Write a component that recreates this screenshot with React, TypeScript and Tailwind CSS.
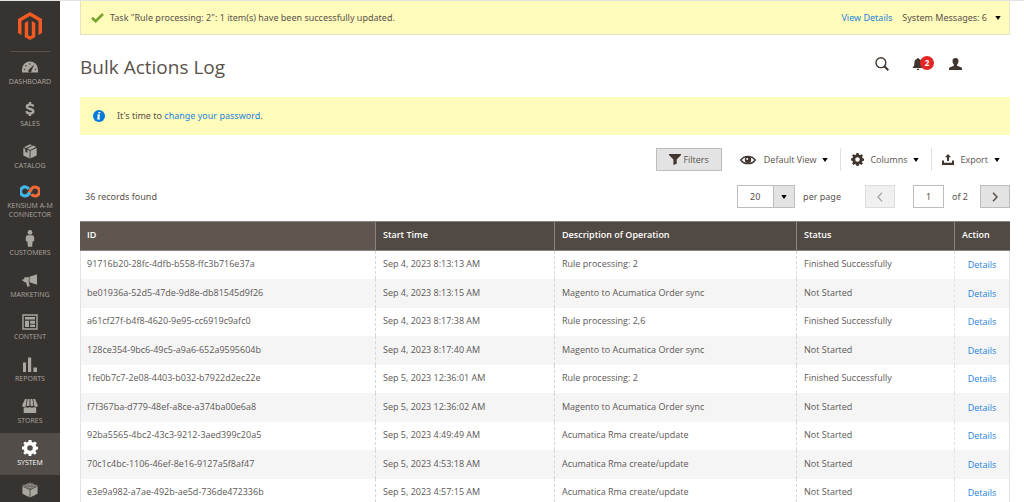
import React from "react";
import clsx from "clsx";

type MenuItem = {
    label: string;
    icon: React.ReactNode;
    active?: boolean;
    tall?: boolean;
};

type LogEntry = {
    id: string;
    startTime: string;
    description: string;
    status: string;
};

const entries: LogEntry[] = [
    { id: "91716b20-28fc-4dfb-b558-ffc3b716e37a", startTime: "Sep 4, 2023 8:13:13 AM", description: "Rule processing: 2", status: "Finished Successfully" },
    { id: "be01936a-52d5-47de-9d8e-db81545d9f26", startTime: "Sep 4, 2023 8:13:15 AM", description: "Magento to Acumatica Order sync", status: "Not Started" },
    { id: "a61cf27f-b4f8-4620-9e95-cc6919c9afc0", startTime: "Sep 4, 2023 8:17:38 AM", description: "Rule processing: 2,6", status: "Finished Successfully" },
    { id: "128ce354-9bc6-49c5-a9a6-652a9595604b", startTime: "Sep 4, 2023 8:17:40 AM", description: "Magento to Acumatica Order sync", status: "Not Started" },
    { id: "1fe0b7c7-2e08-4403-b032-b7922d2ec22e", startTime: "Sep 5, 2023 12:36:01 AM", description: "Rule processing: 2", status: "Finished Successfully" },
    { id: "f7f367ba-d779-48ef-a8ce-a374ba00e6a8", startTime: "Sep 5, 2023 12:36:02 AM", description: "Magento to Acumatica Order sync", status: "Not Started" },
    { id: "92ba5565-4bc2-43c3-9212-3aed399c20a5", startTime: "Sep 5, 2023 4:49:49 AM", description: "Acumatica Rma create/update", status: "Not Started" },
    { id: "70c1c4bc-1106-46ef-8e16-9127a5f8af47", startTime: "Sep 5, 2023 4:53:18 AM", description: "Acumatica Rma create/update", status: "Not Started" },
    { id: "e3e9a982-a7ae-492b-ae5d-736de472336b", startTime: "Sep 5, 2023 4:57:15 AM", description: "Acumatica Rma create/update", status: "Not Started" },
];

// Icons

function IconLogo() {
    return (
        <svg width="24" height="28" viewBox="0 0 24 28" fill="#f15a22">
            <path d="M12 0L0 7v14l3.5 2V9L12 4l8.500 5v14l3.500-2V7z" />
            <path d="M13.800 23.200L12 24.300l-1.800-1.100V9L6.700 11v14L12 28l5.300-3V11L13.800 9z" />
        </svg>
    );
}

function IconDashboard() {
    return (
        <svg width="16" height="12" viewBox="0 0 16 12">
            <path d="M8 .5a8 8 0 0 0-8 8v3h16v-3a8 8 0 0 0-8-8z" fill="currentColor" />
            <path d="M12.200 3.400L9.600 9.600a1.700 1.700 0 1 1-2.600-1.200z" fill="#373330" />
            <g fill="#373330">
                <circle cx="2.500" cy="8.500" r="0.700" />
                <circle cx="4" cy="4.800" r="0.700" />
                <circle cx="7.800" cy="3" r="0.700" />
                <circle cx="13.500" cy="8.500" r="0.700" />
            </g>
        </svg>
    );
}

function IconDollar() {
    return (
        <svg width="10" height="14" viewBox="0 0 10 14" fill="none" stroke="currentColor" strokeWidth="2.400">
            <path d="M8.300 4.500C8 3 6.800 2.600 5 2.600c-1.900 0-3.100.7-3.100 2S3 6.600 5 7s3.300.9 3.300 2.300S7 11.400 5 11.400c-2 0-3.300-.7-3.500-2.300" />
            <path d="M5 0v3M5 11v3" />
        </svg>
    );
}

function IconBox() {
    return (
        <svg width="14" height="15" viewBox="0 0 14 15" fill="currentColor">
            <path d="M7 .3l2.200.9-6 2.800L.9 3.200zM10.200 1.600L13.200 3 7 6 4.200 4.600z" />
            <path d="M.3 4L2.400 4.900v3l1.900.8V5.700l2.300 1v7.800L.3 11.600zM13.700 4v7.600l-6.300 2.900V6.700z" />
        </svg>
    );
}

function IconKensium() {
    return (
        <svg width="20" height="13" viewBox="0 0 20 13" fill="none" strokeWidth="3.200">
            <path d="M8.300 9.300L11.400 3.900A4.500 4.500 0 1 1 11.400 9.100" stroke="#f26a35" />
            <path d="M8.800 4.100A4.500 4.500 0 1 0 8.500 9.200L9.800 7.400" stroke="#3db7ea" />
        </svg>
    );
}

function IconPerson() {
    return (
        <svg width="10" height="17" viewBox="0 0 10 17" fill="currentColor">
            <circle cx="5" cy="2.400" r="2.400" />
            <path d="M3 5.200h4A2.200 2.200 0 0 1 9.200 7.400v3.500l-1.600.5-.5 5.400H2.900l-.5-5.400-1.600-.5V7.400A2.200 2.200 0 0 1 3 5.200z" />
        </svg>
    );
}

function IconMegaphone() {
    return (
        <svg width="16" height="13" viewBox="0 0 16 13" fill="currentColor">
            <path d="M15 .3v10.400L7.500 8.300V2.800zM6.800 3v5.100l.9 4.100-2.400.5L4 8.300H2.200V7.400L.5 7V5.300h1.700V3.400z" />
        </svg>
    );
}

function IconContent() {
    return (
        <svg width="16" height="16" viewBox="0 0 16 16">
            <path d="M1 1h14v14H1z" fill="none" stroke="currentColor" strokeWidth="1.400" />
            <path d="M3 3h10v2.500H3zM3 6.700h4V13H3zM8.200 6.700H13v3H8.200zM8.200 10.800H13V13H8.200z" fill="currentColor" />
        </svg>
    );
}

function IconReports() {
    return (
        <svg width="14" height="15" viewBox="0 0 14 15" fill="currentColor">
            <path d="M0 5.500h3V15H0zM5 .5h3.200V15H5zM10.400 10.500H14V15h-3.600z" />
        </svg>
    );
}

function IconStores() {
    return (
        <svg width="16" height="14" viewBox="0 0 16 14" fill="currentColor">
            <path d="M3 0h1.800L3.900 6.200a1.700 1.700 0 0 1-3.700 0zM5.600 0h1.900v6.200a1.700 1.700 0 0 1-3 0zM8.400 0h2l1 6.200a1.700 1.700 0 0 1-3 0zM11.200 0H13l2.800 6.200a1.700 1.700 0 0 1-3.600 0z" />
            <path d="M1.700 8.700c1 0 1.700-.3 2.200-.8.900 1 2.800 1 4.100 0 1.200 1 3 1 4.200 0 .5.500 1.200.8 2 .8V14H1.700z" />
        </svg>
    );
}

function IconGear({ size }: { size: number }) {
    return (
        <svg width={size} height={size} viewBox="0 0 16 16" fill="currentColor" fillRule="evenodd">
            <path d="M6.600 0h2.800l.4 2 1.500.6L13 1.400 14.800 3.200l-1.200 1.700.6 1.500 1.800.3v2.700l-1.900.4-.6 1.500 1.200 1.700L12.800 14.700l-1.600-1.200-1.500.6L9.300 16H6.700l-.4-1.900-1.500-.6-1.700 1.200L1.300 12.900l1.200-1.700-.6-1.500L0 9.300V6.700l1.900-.4.6-1.500L1.300 3.200 3.100 1.400l1.700 1.200 1.500-.6zM8 5.200a2.800 2.800 0 1 0 0 5.600 2.800 2.800 0 0 0 0-5.600z" />
        </svg>
    );
}

function IconBrick() {
    return (
        <svg width="16" height="16" viewBox="0 0 16 16">
            <path d="M8 .5l7.600 3.300v8L8 15.500.4 11.800v-8z" fill="currentColor" />
            <path d="M.4 4.200L8 7.800l7.600-3.600M8 7.800v7.700" fill="none" stroke="#373330" strokeWidth=".7" />
            <g fill="currentColor" stroke="#373330" strokeWidth=".6">
                <ellipse cx="8" cy="2.300" rx="1.900" ry="1" />
                <ellipse cx="4.400" cy="3.900" rx="1.900" ry="1" />
                <ellipse cx="11.600" cy="3.900" rx="1.900" ry="1" />
                <ellipse cx="8" cy="5.500" rx="1.900" ry="1" />
            </g>
        </svg>
    );
}

function IconCheck() {
    return (
        <svg width="13" height="10" viewBox="0 0 13 10" fill="none" stroke="#79a22e" strokeWidth="2.600">
            <path d="M1 4.800l3.600 3.400L12 1" />
        </svg>
    );
}

function IconInfo() {
    return (
        <svg width="12" height="12" viewBox="0 0 12 12">
            <circle cx="6" cy="6" r="6" fill="#007bdb" />
            <path d="M5.500 1.900h2l-.3 1.700H5.200zM4.400 4.400h2.700L6.300 8.300h.8l-.2 1.200H4.100L4.800 5.500h-.6z" fill="#fff" />
        </svg>
    );
}

function IconSearch() {
    return (
        <svg width="14" height="14" viewBox="0 0 14 14" fill="none" stroke="currentColor">
            <circle cx="5.900" cy="5.700" r="4.900" strokeWidth="1.400" />
            <path d="M9.400 9.200l4 4" strokeWidth="2" />
        </svg>
    );
}

function IconBell() {
    return (
        <svg width="12" height="13" viewBox="0 0 12 13" fill="currentColor">
            <path d="M6 0a1 1 0 0 1 1 1c2 .6 2.600 2.200 2.600 4 0 2.600.9 3.700 2 5H.4c1.100-1.300 2-2.400 2-5 0-1.800.6-3.400 2.600-4a1 1 0 0 1 1-1zM4.600 10.800h2.800a1.400 1.400 0 0 1-2.800 0z" />
        </svg>
    );
}

function IconUser() {
    return (
        <svg width="13" height="12" viewBox="0 0 13 12" fill="currentColor">
            <path d="M6.500 0c2 0 3 1.200 3 3 0 1.600-.6 2.800-1.400 3.600v1.100l3.900 1.500c.7.300 1 .7 1 1.300V12H0v-1.500c0-.6.300-1 1-1.300l3.900-1.500V6.600C4.100 5.800 3.500 4.600 3.500 3c0-1.800 1-3 3-3z" />
        </svg>
    );
}

function IconFunnel() {
    return (
        <svg width="12" height="11" viewBox="0 0 12 11" fill="currentColor">
            <path d="M0 0h12v1L7.700 5.500v4.300L4.400 11V5.500L0 1z" />
        </svg>
    );
}

function IconEye() {
    return (
        <svg width="16" height="10" viewBox="0 0 16 10">
            <path d="M.8 5C4 .2 12 .2 15.200 5 12 9.800 4 9.800.8 5z" fill="#fff" stroke="currentColor" strokeWidth="1.500" />
            <circle cx="8" cy="4.700" r="3.200" fill="currentColor" />
            <circle cx="7.200" cy="3.900" r="1" fill="#fff" />
        </svg>
    );
}

function IconExport() {
    return (
        <svg width="12" height="11" viewBox="0 0 12 11" fill="currentColor">
            <path d="M6 0l3 3.300H7V7H5V3.300H3zM0 6.500h2v2.300h8V6.500h2V11H0z" />
        </svg>
    );
}

function IconCaret() {
    return (
        <svg width="6" height="4" viewBox="0 0 6 4" fill="#000">
            <path d="M.3 0h5.400L3 4z" />
        </svg>
    );
}

function IconChevron({ left }: { left?: boolean }) {
    return (
        <svg width="6" height="10" viewBox="0 0 6 10" fill="none" stroke="currentColor" strokeWidth="1.400">
            <path d={left ? "M5 .8L1 5l4 4.200" : "M1 .8L5 5 1 9.200"} />
        </svg>
    );
}

const menu: MenuItem[] = [
    { label: "Dashboard", icon: <IconDashboard /> },
    { label: "Sales", icon: <IconDollar /> },
    { label: "Catalog", icon: <IconBox /> },
    { label: "Kensium A-M Connector", icon: <IconKensium />, tall: true },
    { label: "Customers", icon: <IconPerson /> },
    { label: "Marketing", icon: <IconMegaphone /> },
    { label: "Content", icon: <IconContent /> },
    { label: "Reports", icon: <IconReports /> },
    { label: "Stores", icon: <IconStores /> },
    { label: "System", icon: <IconGear size={16} />, active: true },
    { label: "", icon: <IconBrick /> },
];

function Sidebar() {
    return (
        <nav className="w-[60px] shrink-0 bg-[#373330] text-[#aaa6a0]">
            <a href="#" aria-label="Magento" className="mx-[10px] flex h-[51px] items-center justify-center border-b border-[#57524d]">
                <IconLogo />
            </a>
            <ul>
                {menu.map((item, i) => (
                    <li key={i}>
                        <a
                            href="#"
                            className={clsx(
                                "flex flex-col items-center text-center text-[7px] leading-[9px] uppercase",
                                item.tall ? "pt-[3px] pb-1" : "pt-[5px] pb-2",
                                item.active && "bg-[#524d49] text-white"
                            )}
                        >
                            <span className="flex h-5 items-center">{item.icon}</span>
                            {item.label}
                        </a>
                    </li>
                ))}
            </ul>
        </nav>
    );
}

function Toolbar() {
    return (
        <div className="mt-[13px] flex h-[23px] items-center justify-end text-[9px]">
            <button type="button" className="flex h-full items-center gap-[2px] border border-[#bdbdbd] bg-[#e3e3e3] px-3 font-medium">
                <span className="text-[#41362f]"><IconFunnel /></span>
                Filters
            </button>
            <button type="button" className="flex h-full items-center border-r border-[#e0e0e0] pr-3 pl-[18px]">
                <span className="mr-2 text-[#41362f]"><IconEye /></span>
                <span className="mr-[6px]">Default View</span>
                <IconCaret />
            </button>
            <button type="button" className="flex h-full items-center border-r border-[#e0e0e0] pr-3 pl-[10px]">
                <span className="mr-[6px] text-[#41362f]"><IconGear size={13} /></span>
                <span className="mr-[6px]">Columns</span>
                <IconCaret />
            </button>
            <button type="button" className="flex h-full items-center pr-[10px] pl-[10px]">
                <span className="mr-[6px] text-[#41362f]"><IconExport /></span>
                <span className="mr-[6px]">Export</span>
                <IconCaret />
            </button>
        </div>
    );
}

function Pager() {
    return (
        <div className="mt-[14px] flex h-[23px] items-center justify-between font-['Noto_Sans',sans-serif] text-[9px]">
            <p className="pl-[5px]">36 records found</p>
            <div className="flex h-full items-center">
                <div className="grid h-full grid-cols-[36px_22px]">
                    <select
                        id="per-page"
                        defaultValue="20"
                        className="col-span-2 col-start-1 row-start-1 h-full appearance-none border border-[#bdbdbd] bg-white pl-3"
                    >
                        <option>20</option>
                        <option>50</option>
                        <option>100</option>
                    </select>
                    <span className="pointer-events-none z-10 col-start-2 row-start-1 flex items-center justify-center border border-[#bdbdbd] bg-[#e3e3e3]">
                        <IconCaret />
                    </span>
                </div>
                <label htmlFor="per-page" className="ml-2">per page</label>
                <button type="button" disabled aria-label="Previous page" className="ml-6 flex h-full w-[30px] items-center justify-center border border-[#dcdcdc] bg-[#f0f0f0] text-[#aaa]">
                    <IconChevron left />
                </button>
                <input id="page" aria-label="Page" defaultValue="1" className="ml-[18px] h-full w-[31px] border border-[#bdbdbd] bg-white text-center" />
                <label htmlFor="page" className="ml-2">of 2</label>
                <button type="button" aria-label="Next page" className="ml-3 flex h-full w-[30px] items-center justify-center border border-[#bdbdbd] bg-[#e3e3e3] text-[#514943]">
                    <IconChevron />
                </button>
            </div>
        </div>
    );
}

function LogTable() {
    const head = "border-y border-[#8a837f] px-[7px] pb-[2px] font-semibold";
    const cell = "border-l border-dashed border-[#d6d6d6] px-[7px] pb-[2px]";

    return (
        <table className="mt-[13px] w-full table-fixed border-separate border-spacing-0 text-left text-[9px]">
            <thead>
                <tr className="h-[30px] text-white">
                    <th className={clsx(head, "bg-[#5f564f]")}>ID</th>
                    <th className={clsx(head, "w-[179px] border-l bg-[#514943]")}>Start Time</th>
                    <th className={clsx(head, "w-[242px] border-l bg-[#514943]")}>Description of Operation</th>
                    <th className={clsx(head, "w-[158px] border-l bg-[#514943]")}>Status</th>
                    <th className={clsx(head, "w-[56px] border-l bg-[#514943]")}>Action</th>
                </tr>
            </thead>
            <tbody className="text-[#5c5855]">
                {entries.map((entry) => (
                    <tr key={entry.id} className="h-7 even:h-[29px] even:bg-[#f5f5f5]">
                        <td className="border-l border-[#e3e3e3] px-[6px] pb-[2px]">{entry.id}</td>
                        <td className={cell}>{entry.startTime}</td>
                        <td className={cell}>{entry.description}</td>
                        <td className={cell}>{entry.status}</td>
                        <td className="border-x border-[#e3e3e3] text-center [border-left-style:dashed]">
                            <a href="#" className="text-[#1f84dc]">Details</a>
                        </td>
                    </tr>
                ))}
            </tbody>
        </table>
    );
}

export default function App() {
    return (
        <div className="flex h-screen overflow-hidden border-t border-[#e3e3e3] bg-white font-['Open_Sans',sans-serif] text-[#5a524c]">
            <Sidebar />
            <main className="min-w-0 flex-1 pr-[14px] pl-5">
                <div className="flex h-[34px] items-center border border-t-0 border-[#e6e3c4] bg-[#fffbbb] pr-2 pl-[10px] font-['Noto_Sans',sans-serif] text-[9px]">
                    <IconCheck />
                    <p className="ml-[6px] flex-1">Task "Rule processing: 2": 1 item(s) have been successfully updated.</p>
                    <a href="#" className="text-[#1f84dc]">View Details</a>
                    <button type="button" className="ml-[10px] flex items-center gap-2">
                        System Messages: 6
                        <IconCaret />
                    </button>
                </div>

                <header className="flex h-[62px] items-center justify-between">
                    <h1 className="pt-[2px] text-[19px]">Bulk Actions Log</h1>
                    <div className="mr-12 flex items-center pb-[4px] text-[#41362f]">
                        <button type="button" aria-label="Search"><IconSearch /></button>
                        <button type="button" aria-label="Notifications" className="relative ml-[23px] w-[22px]">
                            <IconBell />
                            <span className="absolute -top-[2px] right-0 flex h-[14px] w-[14px] items-center justify-center rounded-full bg-[#e22626] text-[8px] font-bold text-white">
                                2
                            </span>
                        </button>
                        <button type="button" aria-label="Account" className="ml-[15px]"><IconUser /></button>
                    </div>
                </header>

                <div className="flex h-[38px] items-center gap-3 bg-[#fffbbb] px-[13px] font-['Noto_Sans',sans-serif] text-[9px]">
                    <IconInfo />
                    <p>
                        It's time to <a href="#" className="text-[#1f84dc]">change your password</a>.
                    </p>
                </div>

                <Toolbar />
                <Pager />
                <LogTable />
            </main>
        </div>
    );
}
